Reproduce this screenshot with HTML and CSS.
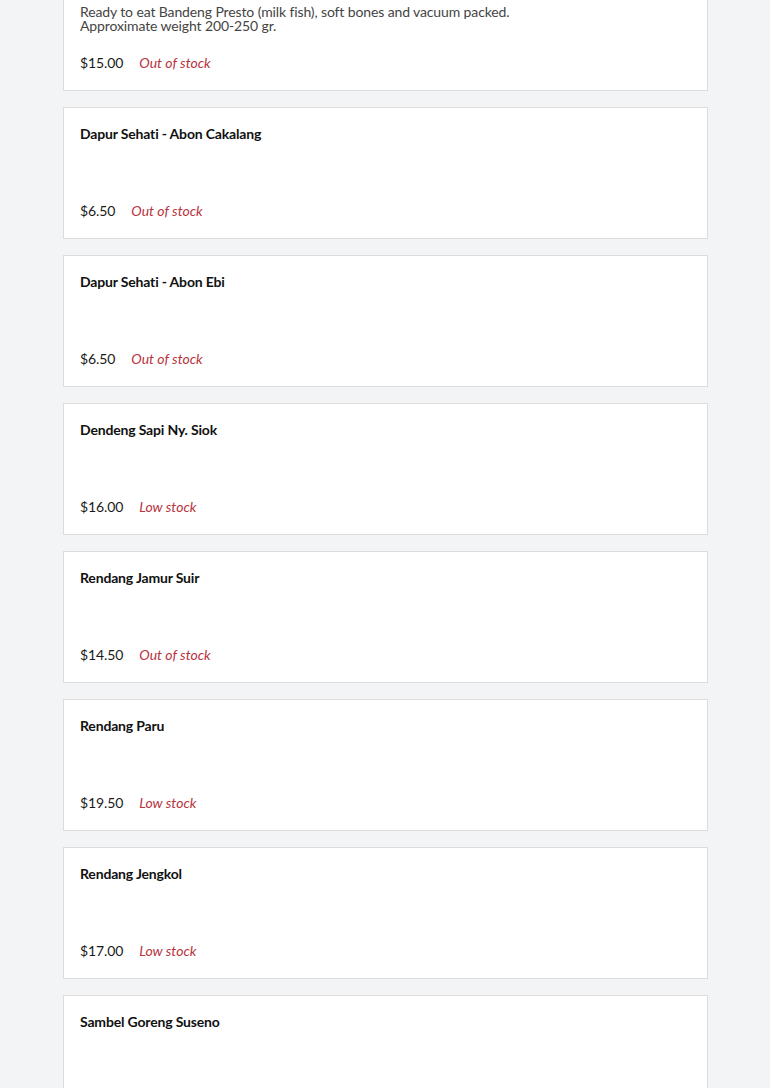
FILE: index.html
```html
<!DOCTYPE html>
<html lang="en">
<head>
<meta charset="utf-8">
<title>Products</title>
<link rel="stylesheet" href="styles.css">
</head>
<body>
<main class="list">
  <article class="card">
    <h3 class="title">Bandeng Presto</h3>
    <p class="desc">Ready to eat Bandeng Presto (milk fish), soft bones and vacuum packed.<br>Approximate weight 200-250 gr.</p>
    <div class="meta"><span class="price">$15.00</span><span class="stock">Out of stock</span></div>
  </article>
  <article class="card">
    <h3 class="title">Dapur Sehati - Abon Cakalang</h3>
    <p class="desc"></p>
    <div class="meta"><span class="price">$6.50</span><span class="stock">Out of stock</span></div>
  </article>
  <article class="card">
    <h3 class="title">Dapur Sehati - Abon Ebi</h3>
    <p class="desc"></p>
    <div class="meta"><span class="price">$6.50</span><span class="stock">Out of stock</span></div>
  </article>
  <article class="card">
    <h3 class="title">Dendeng Sapi Ny. Siok</h3>
    <p class="desc"></p>
    <div class="meta"><span class="price">$16.00</span><span class="stock">Low stock</span></div>
  </article>
  <article class="card">
    <h3 class="title">Rendang Jamur Suir</h3>
    <p class="desc"></p>
    <div class="meta"><span class="price">$14.50</span><span class="stock">Out of stock</span></div>
  </article>
  <article class="card">
    <h3 class="title">Rendang Paru</h3>
    <p class="desc"></p>
    <div class="meta"><span class="price">$19.50</span><span class="stock">Low stock</span></div>
  </article>
  <article class="card">
    <h3 class="title">Rendang Jengkol</h3>
    <p class="desc"></p>
    <div class="meta"><span class="price">$17.00</span><span class="stock">Low stock</span></div>
  </article>
  <article class="card">
    <h3 class="title">Sambel Goreng Suseno</h3>
    <p class="desc"></p>
    <div class="meta"><span class="price">$18.00</span><span class="stock">Low stock</span></div>
  </article>
</main>
</body>
</html>
```

FILE: styles.css
```css
html, body {
  margin: 0;
  padding: 0;
  background: #f3f4f6;
}
body {
  font-family: Lato, "Liberation Sans", sans-serif;
  color: #1a1a1a;
  font-size: 14px;
}
.list {
  display: flex;
  flex-direction: column;
  gap: 16px;
  margin: -41px 62px 0 63px;
}
.card {
  background: #ffffff;
  border: 1px solid #dcdcdc;
  padding: 16px;
  height: 132px;
  box-sizing: border-box;
}
.title {
  margin: 0;
  font-size: 14px;
  font-weight: 700;
  line-height: 20px;
  letter-spacing: -0.17px;
  color: #111;
}
.desc {
  margin: 9px 0 0 0;
  height: 28px;
  font-size: 14px;
  line-height: 14px;
  letter-spacing: -0.12px;
  color: #444;
}
.meta {
  margin-top: 20px;
  display: flex;
  gap: 16px;
  line-height: 20px;
  font-size: 14px;
}
.price {
  color: #1a1a1a;
  letter-spacing: -0.1px;
}
.stock {
  color: #b83440;
  font-style: italic;
}
```
